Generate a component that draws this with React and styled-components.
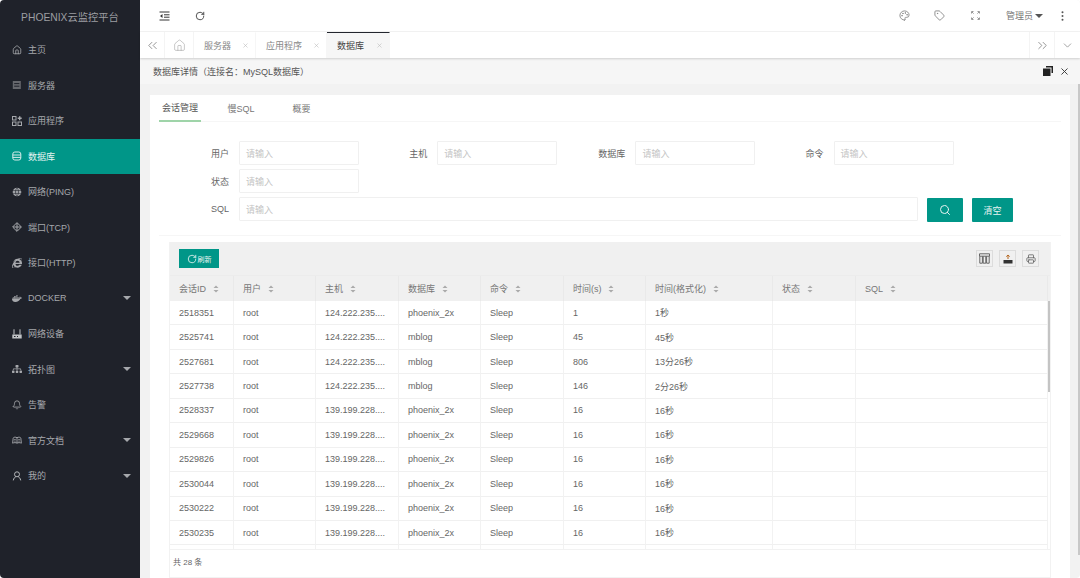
import React from "react";
import styled, { createGlobalStyle } from "styled-components";
import { FaDocker, FaSitemap, FaInternetExplorer } from "react-icons/fa";
import { House, Bell, X, ChevronDown, ChevronsLeft, ChevronsRight, RotateCw, Tag, Palette, Search, Printer } from "lucide-react";

const Global = createGlobalStyle`
  html, body { margin: 0; padding: 0; height: 578px; overflow: hidden; background: #fff; }
  body { font-family: "Liberation Sans", "Noto Sans CJK SC", sans-serif; font-size: 9px; color: #666; }
  * { box-sizing: border-box; }
`;
const Shell = styled.div`display: flex; width: 1080px; height: 578px; overflow: hidden; border-radius: 4px;`;
const Side = styled.aside`width: 140px; flex: none; background: #1f222a; color: #a6a8ac;`;
const Brand = styled.div`height: 32px; display: flex; align-items: center; justify-content: center; font-size: 10.3px; color: #9c9ea2;`;
const NavItem = styled.div`
  height: 35.5px; display: flex; align-items: center; padding: 0 9px 0 12px; gap: 6px;
  background: ${p => (p.$active ? "#009688" : "transparent")};
  color: ${p => (p.$active ? "#e6f4f2" : "#a6a8ac")};
`;
const NavIcon = styled.span`width: 10px; height: 10px; display: flex; align-items: center; justify-content: center; flex: none;`;
const NavLabel = styled.span`flex: 1;`;
const Caret = styled.span`
  width: 0; height: 0; border-left: ${p => p.$r || 4.5}px solid transparent; border-right: ${p => p.$r || 4.5}px solid transparent;
  border-top: ${p => p.$r || 4.5}px solid ${p => p.$color || "#a6a8ac"}; flex: none;
`;
const Main = styled.main`flex: 1; min-width: 0; display: flex; flex-direction: column; background: #f2f2f2; position: relative;`;
const Header = styled.header`height: 32px; background: #fff; border-bottom: 1px solid #f4f4f4; display: flex; align-items: center; padding: 0 16px 0 19px; flex: none;`;
const HeaderLeft = styled.div`display: flex; align-items: center; gap: 25px; flex: 1; color: #333;`;
const HeaderRight = styled.div`display: flex; align-items: center; color: #888;`;
const HeaderIcon = styled.span`width: 35.5px; display: flex; justify-content: center; color: #888;`;
const UserMenu = styled.span`display: flex; align-items: center; gap: 2px; margin: 0 18px 0 13px; color: #777;`;
const TabBar = styled.nav`height: 26px; background: #fff; display: flex; align-items: stretch; flex: none; box-shadow: 0 1px 2px rgba(0,0,0,.16); position: relative; z-index: 1;`;
const TabEnd = styled.span`width: ${p => p.$w}px; display: flex; align-items: center; justify-content: center; color: #888; border-left: ${p => (p.$line ? "1px solid #f4f4f4" : "none")}; border-right: ${p => (p.$rline ? "1px solid #f4f4f4" : "none")};`;
const Tab = styled.span`
  width: ${p => p.$w}px; display: flex; align-items: center; justify-content: space-between; padding: 0 6px 0 10px;
  color: ${p => (p.$active ? "#444" : "#888")}; background: ${p => (p.$active ? "#f6f6f6" : "#fff")};
  border-top: ${p => (p.$active ? "1px solid #23262e" : "1px solid transparent")};
  border-right: 1px solid #f6f6f6;
`;
const TabSpacer = styled.span`flex: 1;`;
const TitleBar = styled.div`height: 26px; background: #f6f6f6; display: flex; align-items: center; justify-content: space-between; padding: 0 10px 0 13px; flex: none; color: #555;`;
const TitleTools = styled.span`display: flex; align-items: center; gap: 6px; color: #333;`;
const Body = styled.div`flex: 1; min-height: 0; padding: 11px 10px 0 10px;`;
const Card = styled.section`background: #fff; height: 483px; display: flex; flex-direction: column;`;
const SubTabs = styled.div`height: 27px; display: flex; margin: 0 9px; border-bottom: 1px solid #f6f6f6; flex: none;`;
const SubTab = styled.span`
  width: ${p => p.$w}px; display: flex; align-items: center; justify-content: center; height: 27px;
  color: ${p => (p.$active ? "#555" : "#777")}; border-bottom: ${p => (p.$active ? "2px solid #9fd4a9" : "none")};
`;
const Form = styled.div`
  margin: 0 9px; padding: 19px 0 13px 0; border-bottom: 1px solid #f6f6f6;
  display: grid; grid-template-columns: repeat(4, 198.2px); grid-auto-rows: 24px; row-gap: 4px; flex: none;
  min-height: 114px;
`;
const Field = styled.label`display: flex; align-items: center; ${p => p.$wide && "grid-column: 1 / -1;"}`;
const FieldLabel = styled.span`width: 70px; margin-right: 10px; text-align: right; color: #666; flex: none;`;
const FakeInput = styled.span`
  width: ${p => p.$w}px; height: 24px; border: 1px solid #f0f0f0; border-radius: 1px; color: #c4c4c4;
  display: flex; align-items: center; padding: 0 6px; flex: none; background: #fff;
`;
const TealBtn = styled.span`
  width: ${p => p.$w}px; height: 24px; background: #009688; border-radius: 1px; color: #e6f4f2; margin: 2px 0 0 9px;
  display: flex; align-items: center; justify-content: center; flex: none;
`;
const TableWrap = styled.div`margin: 6px 19px 0 19px; border-left: 1px solid #f2f2f2; border-right: 1px solid #f2f2f2; flex: 1; min-height: 0; display: flex; flex-direction: column; position: relative; width: 882px; border-bottom: 1px solid #f2f2f2;`;
const Toolbar = styled.div`height: 34px; background: #f0f0f0; display: flex; align-items: center; justify-content: space-between; padding: 0 11px 0 9px; flex: none; border-bottom: 1px solid #ececec;`;
const RefreshBtn = styled.span`width: 40px; height: 19px; background: #009688; color: #e6f4f2; display: flex; align-items: center; justify-content: center; gap: 1px; font-size: 7px;`;
const ToolIcons = styled.span`display: flex; gap: 6px;`;
const ToolIcon = styled.span`width: 17px; height: 17px; border: 1px solid #dcdcdc; display: flex; align-items: center; justify-content: center; color: #666;`;
const Grid = styled.div`
  flex: 1; min-height: 0; overflow: hidden; display: grid;
  grid-template-columns: 64px 82px 83px 82px 83px 82px 127px 83px 192px 4px;
  grid-template-rows: 25px; grid-auto-rows: 24.45px; align-content: start;
`;
const HeadCell = styled.div`
  background: #f0f0f0; display: flex; align-items: center; padding: 0 9px; gap: 6.5px; color: #777;
  border-right: 1px solid #e9e9e9;
`;
const Cell = styled.div`
  display: flex; align-items: center; padding: 0 9px; color: #666; white-space: nowrap;
  border-right: 1px solid #f2f2f2; border-bottom: 1px solid #f0f0f0;
`;
const Gutter = styled.div`background: #fff;`;
const GutterHead = styled.div`background: #f0f0f0;`;
const Thumb = styled.div`position: absolute; right: 0; top: 59px; width: 2px; height: 91px; background: #c4c4c4;`;
const PageThumb = styled.div`position: absolute; right: 0; top: 84px; width: 2px; height: 471px; background: #c8c8c8;`;
const Pager = styled.div`height: 28px; display: flex; align-items: center; padding: 0 3px 4px; color: #666; font-size: 8px; background: #fff; flex: none; border-top: 1px solid #f2f2f2;`;
const Sort = styled.svg`width: 6px; height: 8px; flex: none;`;

const SortMark = () => (
  <Sort viewBox="0 0 6 8"><path d="M3 0.5 5.5 3H.5zM3 7.5.5 5h5z" fill="#aaa" /></Sort>
);
const S = 10;
const ServerIcon = () => (<svg width={S} height={S} viewBox="0 0 10 10"><rect x=".8" y="1" width="8" height="8" fill="#66686d" /><path d="M2.2 3.6h5.2M2.2 6.2h5.2" stroke="#1f222a" /></svg>);
const AppIcon = () => (<svg width={S} height={S} viewBox="0 0 10 10" fill="none" stroke="#a6a8ac"><rect x=".5" y=".5" width="3.5" height="3.5" /><rect x=".5" y="6" width="3.5" height="3.5" /><rect x="6" y="6" width="3.5" height="3.5" /><path d="M7.7 .3v4M5.7 2.3h4" strokeWidth="1.4" /></svg>);
const DbIcon = () => (<svg width={S} height={S} viewBox="0 0 10 10" fill="none" stroke="#d5ecea"><rect x=".8" y="1" width="8" height="8" rx="2" /><path d="M.8 4h8M.8 6.4h8" /></svg>);
const GlobeIcon = () => (<svg width={S} height={S} viewBox="0 0 10 10"><circle cx="5" cy="5" r="4.3" fill="#a6a8ac" /><path d="M.8 3.6h8.4M.8 6.4h8.4M5 .7c-2 2.6-2 6 0 8.6M5 .7c2 2.6 2 6 0 8.6" fill="none" stroke="#1f222a" strokeWidth=".6" /></svg>);
const PortIcon = () => (<svg width={S} height={S} viewBox="0 0 10 10" fill="none" stroke="#a6a8ac"><path d="M5 .6 9.4 5 5 9.4.6 5zM1 5h8M5 1v8" /></svg>);
const DeviceIcon = () => (<svg width={S} height={S} viewBox="0 0 10 10"><path d="M.3 5.5h9.4v4H.3z" fill="#c0c2c5" /><path d="M2 .3v5.2M8 .3v5.2" stroke="#c0c2c5" /><path d="M2 7.5h1.5M5 7.5h1" stroke="#1f222a" /></svg>);
const BookIcon = () => (<svg width="11" height="10" viewBox="0 0 11 10" fill="none" stroke="#a6a8ac"><path d="M.7 8.5 1.3 3C1.5 1.8 4 1.5 5.5 2.5 7 1.5 9.5 1.8 9.7 3l.6 5.5c-1.6-.8-3.6-.8-4.8 0-1.2-.8-3.2-.8-4.8 0zM5.5 2.5v6M2.5 4.5h1.5M7 4.5h1.5M2.5 6.2h1.5M7 6.2h1.5" /></svg>);
const UserIcon = () => (<svg width={S} height={S} viewBox="0 0 10 10" fill="none" stroke="#b4b6b9"><circle cx="5" cy="3.3" r="2.5" /><path d="M1.3 9.4C1.6 7.2 3 5.9 4 5.7M8.7 9.4C8.4 7.2 7 5.9 6 5.7" /></svg>);
const FoldIcon = () => (<svg width="11" height="10" viewBox="0 0 11 10" fill="none" stroke="#333"><path d="M.5 1h10M5 3.8h5.5M5 6.2h5.5M.5 9h10" /><path d="M3.5 3 1 5l2.5 2z" fill="#333" stroke="none" /></svg>);
const FullIcon = () => (<svg width="9" height="9" viewBox="0 0 9 9" fill="none" stroke="#999"><path d="M.5 2.5V.5h2M6.5.5h2v2M8.5 6.5v2h-2M2.5 8.5h-2v-2M1 1l1.6 1.6M8 1 6.4 2.6M8 8 6.4 6.4M1 8l1.6-1.6" /></svg>);
const DotsIcon = () => (<svg width="3" height="10" viewBox="0 0 3 10" fill="#555"><circle cx="1.5" cy="1.2" r="1" /><circle cx="1.5" cy="5" r="1" /><circle cx="1.5" cy="8.8" r="1" /></svg>);
const RestoreIcon = () => (<svg width="10" height="10" viewBox="0 0 10 10" fill="#222"><path d="M3 0h7v7H8.5V1.5H3z" /><rect x="0" y="2.5" width="7.5" height="7.5" /></svg>);
const ColsIcon = () => (<svg width="11" height="11" viewBox="0 0 11 11" fill="none" stroke="#666"><path d="M.5.8h10v2.4H.5zM.8 3.2v7h2.6v-7M4.2 3.2v7h2.6v-7M7.6 3.2v7h2.6v-7" /></svg>);
const ExportIcon = () => (<svg width="10" height="10" viewBox="0 0 10 10"><path d="M.5 6h9v3.5h-9z" fill="#333" /><path d="M5 5V1M3.3 2.6 5 1l1.7 1.6" fill="none" stroke="#b5651d" /></svg>);

const nav = [
  ["主页", <House size={10} />], ["服务器", <ServerIcon />], ["应用程序", <AppIcon />],
  ["数据库", <DbIcon />, false, true], ["网络(PING)", <GlobeIcon />], ["端口(TCP)", <PortIcon />],
  ["接口(HTTP)", <FaInternetExplorer size={10} />], ["DOCKER", <FaDocker size={11} />, true],
  ["网络设备", <DeviceIcon />], ["拓扑图", <FaSitemap size={10} />, true], ["告警", <Bell size={10} />],
  ["官方文档", <BookIcon />, true], ["我的", <UserIcon />, true],
];
const heads = ["会话ID", "用户", "主机", "数据库", "命令", "时间(s)", "时间(格式化)", "状态", "SQL"];
const h1 = "124.222.235....", h2 = "139.199.228....";
const rows = [
  ["2518351", h1, "phoenix_2x", "1", "1秒"], ["2525741", h1, "mblog", "45", "45秒"],
  ["2527681", h1, "mblog", "806", "13分26秒"], ["2527738", h1, "mblog", "146", "2分26秒"],
  ["2528337", h2, "phoenix_2x", "16", "16秒"], ["2529668", h2, "phoenix_2x", "16", "16秒"],
  ["2529826", h2, "phoenix_2x", "16", "16秒"], ["2530044", h2, "phoenix_2x", "16", "16秒"],
  ["2530222", h2, "phoenix_2x", "16", "16秒"], ["2530235", h2, "phoenix_2x", "16", "16秒"],
];
const Close = () => <X size={7} color="#bbb" />;

export default function App() {
  return (
    <Shell>
      <Global />
      <Side>
        <Brand>PHOENIX云监控平台</Brand>
        {nav.map(([label, icon, caret, active]) => (
          <NavItem key={label} $active={active}>
            <NavIcon>{icon}</NavIcon>
            <NavLabel>{label}</NavLabel>
            {caret && <Caret />}
          </NavItem>
        ))}
      </Side>
      <Main>
        <Header>
          <HeaderLeft><FoldIcon /><RotateCw size={10} strokeWidth={2} /></HeaderLeft>
          <HeaderRight>
            <HeaderIcon><Palette size={11} /></HeaderIcon>
            <HeaderIcon><Tag size={11} /></HeaderIcon>
            <HeaderIcon><FullIcon /></HeaderIcon>
            <UserMenu>管理员<Caret $r={4} $color="#555" /></UserMenu>
            <DotsIcon />
          </HeaderRight>
        </Header>
        <TabBar>
          <TabEnd $w={25} $rline><ChevronsLeft size={15} strokeWidth={1.4} /></TabEnd>
          <TabEnd $w={29} $rline><House size={13} strokeWidth={1} color="#999" /></TabEnd>
          <Tab $w={62}>服务器<Close /></Tab>
          <Tab $w={71}>应用程序<Close /></Tab>
          <Tab $w={63} $active>数据库<Close /></Tab>
          <TabSpacer />
          <TabEnd $w={25} $line><ChevronsRight size={15} strokeWidth={1.4} /></TabEnd>
          <TabEnd $w={26} $line><ChevronDown size={13} strokeWidth={1.4} /></TabEnd>
        </TabBar>
        <TitleBar>
          <span>数据库详情（连接名：MySQL数据库）</span>
          <TitleTools><RestoreIcon /><X size={11} strokeWidth={2} /></TitleTools>
        </TitleBar>
        <Body>
          <Card>
            <SubTabs>
              <SubTab $w={42} $active>会话管理</SubTab>
              <SubTab $w={80}>慢SQL</SubTab>
              <SubTab $w={41}>概要</SubTab>
            </SubTabs>
            <Form>
              {["用户", "主机", "数据库", "命令", "状态"].map(l => (
                <Field key={l}><FieldLabel>{l}</FieldLabel><FakeInput $w={120}>请输入</FakeInput></Field>
              ))}
              <Field $wide>
                <FieldLabel>SQL</FieldLabel>
                <FakeInput $w={679}>请输入</FakeInput>
                <TealBtn $w={36}><Search size={12} /></TealBtn>
                <TealBtn $w={41}>清空</TealBtn>
              </Field>
            </Form>
            <TableWrap>
              <Toolbar>
                <RefreshBtn><RotateCw size={10} />刷新</RefreshBtn>
                <ToolIcons>
                  <ToolIcon><ColsIcon /></ToolIcon>
                  <ToolIcon><ExportIcon /></ToolIcon>
                  <ToolIcon><Printer size={10} /></ToolIcon>
                </ToolIcons>
              </Toolbar>
              <Grid>
                {heads.map(h => <HeadCell key={h}>{h}<SortMark /></HeadCell>)}
                <GutterHead />
                {rows.map(r => (
                  <React.Fragment key={r[0]}>
                    <Cell>{r[0]}</Cell><Cell>root</Cell><Cell>{r[1]}</Cell><Cell>{r[2]}</Cell><Cell>Sleep</Cell>
                    <Cell>{r[3]}</Cell><Cell>{r[4]}</Cell><Cell /><Cell /><Gutter />
                  </React.Fragment>
                ))}
                <Cell /><Cell /><Cell /><Cell /><Cell /><Cell /><Cell /><Cell /><Cell /><Gutter />
              </Grid>
              <Thumb />
              <Pager>共 28 条</Pager>
            </TableWrap>
          </Card>
        </Body>
        <PageThumb />
      </Main>
    </Shell>
  );
}
